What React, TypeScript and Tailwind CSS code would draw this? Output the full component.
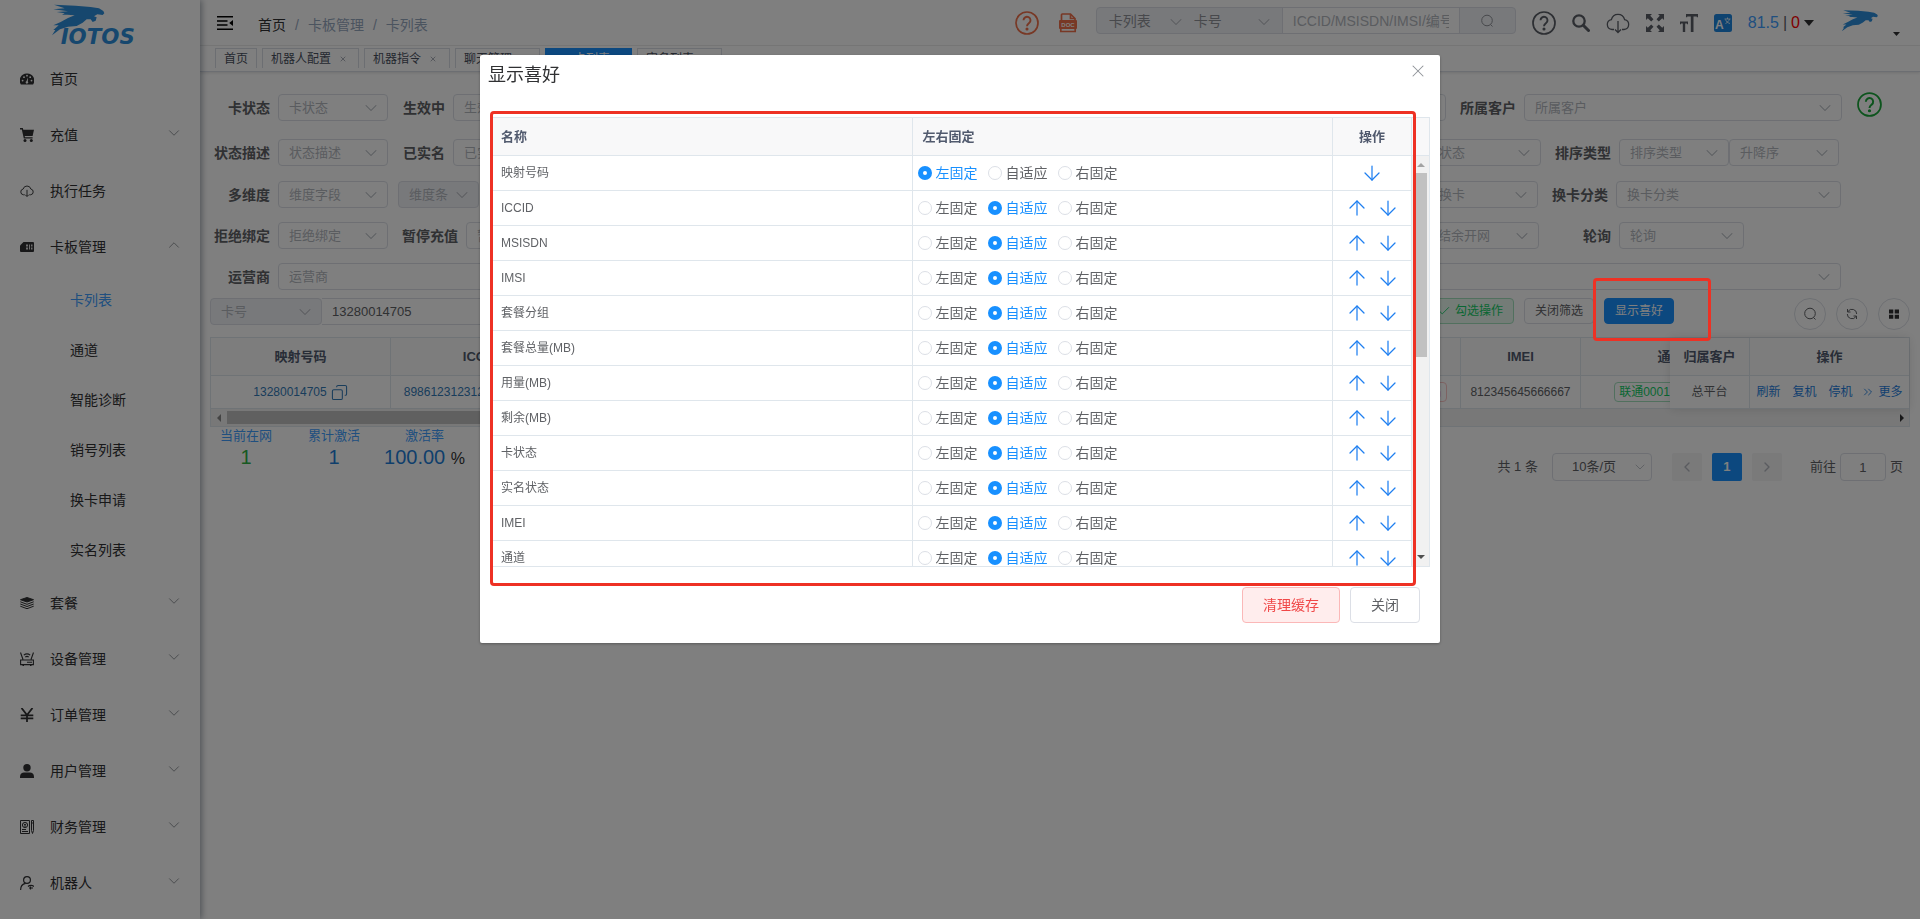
import { type ReactNode } from 'react'
import { ArrowDown, ArrowUp, Check, ChevronDown, ChevronLeft, ChevronRight, ChevronUp, ChevronsRight, Copy, X } from 'lucide-react'
import clsx from 'clsx'

const HORSE = 'M30 14 L95 17 L140 21 L165 25 L178 33 L181 40 L176 45 L160 43 L150 49 L158 52 L155 62 L146 66 L140 58 L128 58 L116 68 L98 78 L72 80 L48 88 L24 106 L34 90 L28 90 L44 76 L28 76 L50 66 L72 54 L92 46 L70 44 L54 44 L62 40 L38 36 L72 34 L28 28 L62 25 Z'

const rows = ['映射号码', 'ICCID', 'MSISDN', 'IMSI', '套餐分组', '套餐总量(MB)', '用量(MB)', '剩余(MB)', '卡状态', '实名状态', 'IMEI', '通道']
const pins = ['左固定', '自适应', '右固定']

const subMenu = ['卡列表', '通道', '智能诊断', '销号列表', '换卡申请', '实名列表']

const menu = [
    { label: '首页', icon: <DashboardIcon /> },
    { label: '充值', icon: <CartIcon />, arrow: 'down' },
    { label: '执行任务', icon: <CloudIcon size={14} width={1.6} /> },
    { label: '卡板管理', icon: <SimIcon />, arrow: 'up', children: subMenu },
    { label: '套餐', icon: <LayersIcon />, arrow: 'down' },
    { label: '设备管理', icon: <RouterIcon />, arrow: 'down' },
    { label: '订单管理', icon: <YenIcon />, arrow: 'down' },
    { label: '用户管理', icon: <UserIcon />, arrow: 'down' },
    { label: '财务管理', icon: <FinanceIcon />, arrow: 'down' },
    { label: '机器人', icon: <RobotIcon />, arrow: 'down' },
]

const tags = [
    { label: '首页', width: 'w-[42px]' },
    { label: '机器人配置', width: 'w-[97px]', closable: true },
    { label: '机器指令', width: 'w-[86px]', closable: true },
    { label: '聊天管理', width: 'w-[85px]', closable: true },
    { label: '卡列表', width: 'w-[87px]', closable: true, active: true },
    { label: '实名列表', width: 'w-[85px]', closable: true },
]

function DashboardIcon () {
    return (
        <svg width="14" height="14" viewBox="0 0 14 14">
            <path d="M7 1.5A7 7 0 0 0 .9 12.4h12.2A7 7 0 0 0 7 1.5Z" fill="currentColor" />
            <g fill="#fff">
                <circle cx="2.6" cy="8.6" r=".9" />
                <circle cx="4" cy="5.2" r=".9" />
                <circle cx="7" cy="3.7" r=".9" />
                <circle cx="10.2" cy="5.2" r=".9" />
                <circle cx="11.5" cy="8.6" r=".9" />
                <path d="M8 5.5 7.8 9.4a1.3 1.3 0 1 1-1.4-.2Z" />
            </g>
        </svg>
    )
}

function CartIcon () {
    return (
        <svg width="14" height="14" viewBox="0 0 14 14" fill="currentColor">
            <path d="M0 0h2.8l.5 1.8H14L12.6 8H4.7l.3 1.2h7.6v1.4H3.8L1.8 1.4H0Z" />
            <circle cx="5" cy="12.4" r="1.5" />
            <circle cx="11.3" cy="12.4" r="1.5" />
        </svg>
    )
}

function CloudIcon ({ size, width }: { size: number, width: number }) {
    return (
        <svg width={size} height={size} viewBox="0 0 24 24" fill="none" stroke="currentColor" strokeWidth={width}>
            <path d="M8 18.500H6a5 5 0 0 1-.6-9.900 6.800 6.800 0 0 1 13.200 0A5 5 0 0 1 18 18.500h-2" />
            <path d="M12 10v11M9 18.500l3 3 3-3" />
        </svg>
    )
}

function SimIcon () {
    return (
        <svg width="14" height="14" viewBox="0 0 14 14">
            <path d="M3.500 2H13a1 1 0 0 1 1 1v8a1 1 0 0 1-1 1H1a1 1 0 0 1-1-1V5.500Z" fill="currentColor" />
            <path d="M6 4.500h2v2H6zM6 7.500h2v2H6zM9 4.500h1v5H9zM11 4.500h1.500v2H11zM11 7.500h1.500v2H11z" fill="#ddd" />
        </svg>
    )
}

function LayersIcon () {
    return (
        <svg width="14" height="14" viewBox="0 0 14 14" fill="none" stroke="currentColor" strokeWidth="1">
            <path d="M7 1.500 13.500 3.700 7 6 .5 3.700Z" fill="currentColor" />
            <path d="M.3 5.800 7 8.300l6.700-2.500M.3 8 7 10.500 13.700 8M.3 10.200 7 12.700l6.700-2.500" />
        </svg>
    )
}

function RouterIcon () {
    return (
        <svg width="14" height="14" viewBox="0 0 14 14" fill="none" stroke="currentColor" strokeWidth="1.1">
            <path d="M.6 8h12.800v4.600H.6zM.5.5 3 7.500M13.500.5 11 7.500M2.500 13.500h1.500M10 13.500h1.500M7 10.300h5" />
            <path d="M3.800 3.200a5 5 0 0 1 6.400 0M5.300 5a3 3 0 0 1 3.400 0" />
        </svg>
    )
}

function YenIcon () {
    return (
        <svg width="14" height="14" viewBox="0 0 14 14" fill="none" stroke="currentColor" strokeWidth="1.8">
            <path d="M1.500 0 7 7l5.500-7M7 7v7M.7 7.300h12.600M.7 10.300h12.600" />
        </svg>
    )
}

function UserIcon () {
    return (
        <svg width="14" height="14" viewBox="0 0 14 14" fill="currentColor">
            <circle cx="7" cy="3.700" r="3.700" />
            <path d="M0 14v-1.500C0 9.800 2 8.400 4 8.400h6c2 0 4 1.400 4 4.100V14Z" />
        </svg>
    )
}

function FinanceIcon () {
    return (
        <svg width="14" height="14" viewBox="0 0 14 14" fill="none" stroke="currentColor" strokeWidth="1">
            <path d="M.5.5h9v13h-9zM2 9.500h4M2 11.500h6M11.500.5h2v10l-1 3-1-3ZM11.500 3h2" />
            <circle cx="5" cy="5" r="2.600" />
            <path d="m4 3.800 1 1.200 1-1.200M5 5v2" />
        </svg>
    )
}

function RobotIcon () {
    return (
        <svg width="14" height="14" viewBox="0 0 14 14" fill="none" stroke="currentColor" strokeWidth="1.200">
            <circle cx="7" cy="4" r="3.400" />
            <path d="M.6 14c0-3.500 2-6 5-6.600" />
            <path d="M8 10.500c1.500-1.500 4.500-1.500 6 0M9 12h4M10.500 13.500v-3" />
        </svg>
    )
}

function HelpIcon ({ size }: { size: number }) {
    return (
        <svg width={size} height={size} viewBox="0 0 24 24" fill="none" stroke="currentColor" strokeWidth="1.700">
            <circle cx="12" cy="12" r="11" />
            <path d="M8.500 9.300a3.500 3.500 0 1 1 5.600 2.800c-1.300 1-2.100 1.500-2.100 3.200" strokeWidth="1.900" />
            <circle cx="12" cy="18" r=".7" fill="currentColor" />
        </svg>
    )
}

function DocIcon () {
    return (
        <svg width="18" height="20" viewBox="0 0 18 20">
            <path d="M2.500 8V1.700C2.500 1.200 3 1 3.300 1h8.200L16 5.500V8M11.500 1v4.500H16" fill="none" stroke="currentColor" strokeWidth="1.700" />
            <rect y="7" width="18" height="9" rx="1" fill="currentColor" />
            <path d="M1.800 16v2.500h14.400V16" fill="none" stroke="currentColor" strokeWidth="1.700" />
            <text x="9" y="14" textAnchor="middle" fontSize="6" fontWeight="700" fill="#fff">DOC</text>
        </svg>
    )
}

function MagnifierIcon () {
    return (
        <svg width="18" height="18" viewBox="0 0 18 18" fill="none" stroke="currentColor">
            <circle cx="7" cy="7" r="5.700" strokeWidth="2.300" />
            <path d="m11.500 11.500 5 5" strokeWidth="3" strokeLinecap="round" />
        </svg>
    )
}

// Round lens with a short tail, used by the outlined search buttons
function SearchIcon () {
    return (
        <svg width="14" height="14" viewBox="0 0 14 14" fill="none" stroke="currentColor" strokeWidth="1">
            <circle cx="7" cy="6.500" r="5.300" />
            <path d="m10.500 10.500 2 2" />
        </svg>
    )
}

function FullscreenIcon () {
    return (
        <svg width="18" height="18" viewBox="0 0 18 18" fill="currentColor">
            <path d="M0 0h6L4.200 1.800 7.500 5.200 5.200 7.500 1.800 4.200 0 6ZM18 0v6l-1.800-1.800-3.400 3.300-2.300-2.300 3.300-3.400L12 0ZM0 18v-6l1.800 1.800 3.400-3.300 2.300 2.300-3.300 3.400L6 18ZM18 18h-6l1.800-1.800-3.300-3.400 2.300-2.300 3.400 3.300L18 12Z" />
        </svg>
    )
}

function FontSizeIcon () {
    return (
        <svg width="18" height="18" viewBox="0 0 18 18" fill="currentColor">
            <path d="M6 0h12v3.200h-1.200V2.400h-3.300V18h-2.700V2.400H7.200v.8H6ZM0 7.500h8v2.700H7V9.500H5.200V18H2.800V9.500H1v.7H0Z" />
        </svg>
    )
}

function LangIcon () {
    return (
        <svg width="18" height="18" viewBox="0 0 18 18">
            <rect width="18" height="18" rx="2.500" fill="#1c86e0" />
            <text x="1" y="15" fontSize="12" fontWeight="700" fill="#fff">A</text>
            <path d="M10.500 5h6M13.500 3.500V5M11.500 9.500c2-1 3.500-2.500 4-4.500M11.500 5.500c.7 2 2.500 3.500 4.500 4" fill="none" stroke="#fff" strokeWidth=".8" />
        </svg>
    )
}

function HamburgerIcon () {
    return (
        <svg width="16" height="14" viewBox="0 0 16 14" fill="#000">
            <path d="M0 0h16v1.500H0zM0 4.200h10.500v1.500H0zM0 8.300h10.500v1.500H0zM0 12.500h16V14H0zM16 4v6l-3.800-3Z" />
        </svg>
    )
}

function RefreshIcon () {
    return (
        <svg width="14" height="14" viewBox="0 0 14 14" fill="none" stroke="currentColor" strokeWidth="1">
            <path d="M3 4.500A4.700 4.700 0 0 1 11.700 7M11 9.500A4.700 4.700 0 0 1 2.300 7M2.500 2v3h3M11.500 12V9h-3" />
        </svg>
    )
}

function GridIcon () {
    return (
        <svg width="14" height="14" viewBox="0 0 14 14" fill="#303133">
            <path d="M2 2.500h4.300v4H2zM7.700 2.500H12v4H7.700zM2 7.700h4.300v4H2zM7.700 7.700H12v4H7.700z" />
        </svg>
    )
}

function Triangle ({ points, className }: { points: string, className: string }) {
    return (
        <svg width="10" height="10" viewBox="0 0 10 10" className={className} fill="currentColor">
            <polygon points={points} />
        </svg>
    )
}

function Field ({ label, className, disabled }: { label: string, className: string, disabled?: boolean }) {
    return (
        <div className={clsx('relative', className)}>
            <select
                aria-label={label}
                className={clsx(
                    'block h-[27px] w-full appearance-none rounded border border-[#dcdfe6] pr-6 pl-[10px] text-[13px] text-[#b4b8bf]',
                    disabled ? 'bg-[#f0f2f7]' : 'bg-white'
                )}
            >
                <option>{label}</option>
            </select>
            <ChevronDown size={20} strokeWidth={1.25} className="pointer-events-none absolute top-1 right-[7px] text-[#b4b8bf]" />
        </div>
    )
}

function Label ({ children, className }: { children: ReactNode, className?: string }) {
    return <span className={clsx('shrink-0 pt-1 pr-2 text-right text-sm leading-5 font-bold text-[#606266]', className)}>{children}</span>
}

function Sidebar () {
    return (
        <aside className="relative z-10 w-[200px] shrink-0 bg-white shadow-[2px_0_6px_rgba(0,21,41,0.35)]">
            <a href="#" aria-label="IOTOS" className="block h-[51px] pl-11">
                <svg width="100" height="50" viewBox="0 0 300 150" fill="#2d8fdc">
                    <path d={HORSE} />
                    <text x="50" y="132" fontSize="64" fontWeight="700" fontStyle="italic" fontFamily="DejaVu Sans">IOTOS</text>
                </svg>
            </a>
            <nav>
                <ul>
                    {menu.map(item => (
                        <li key={item.label}>
                            <a href="#" className="flex h-14 items-center pr-[17px] pl-5 text-sm text-[#303133]">
                                <span className="w-[30px] shrink-0">{item.icon}</span>
                                <span className="flex-1">{item.label}</span>
                                {item.arrow === 'down' && <ChevronDown size={18} strokeWidth={1.25} className="mb-1 text-[#909399]" />}
                                {item.arrow === 'up' && <ChevronUp size={18} strokeWidth={1.25} className="mb-1 text-[#909399]" />}
                            </a>
                            {item.children && (
                                <ul>
                                    {item.children.map((child, idx) => (
                                        <li key={child}>
                                            <a href="#" className={clsx('flex h-[50px] items-center pl-[70px] text-sm', idx === 0 ? 'text-[#409eff]' : 'text-[#303133]')}>
                                                {child}
                                            </a>
                                        </li>
                                    ))}
                                </ul>
                            )}
                        </li>
                    ))}
                </ul>
            </nav>
        </aside>
    )
}

function Navbar () {
    return (
        <header className="flex h-[46px] items-center border-b border-[#f0f0f0] pr-[19px] pl-[17px]">
            <button type="button" aria-label="折叠菜单"><HamburgerIcon /></button>
            <nav className="ml-[25px] flex flex-1 gap-[9px] pt-1 text-sm text-[#97a8be]">
                <a href="#" className="text-[#303133]">首页</a>
                <span>/</span>
                <span>卡板管理</span>
                <span>/</span>
                <span>卡列表</span>
            </nav>
            <button type="button" aria-label="帮助" className="mr-5 text-[#f0704a]"><HelpIcon size={24} /></button>
            <button type="button" aria-label="文档" className="mr-[19px] text-[#f0704a]"><DocIcon /></button>
            <div className="mr-4 mb-1 flex h-[27px] w-[420px] overflow-hidden rounded border border-[#dcdfe6] bg-[#f0f2f7] text-sm text-[#909399]">
                <div className="relative w-[85px]">
                    <select aria-label="页面" className="h-full w-full appearance-none pl-3">
                        <option>卡列表</option>
                    </select>
                    <ChevronDown size={20} strokeWidth={1.25} className="pointer-events-none absolute top-1 -right-1 text-[#b4b8bf]" />
                </div>
                <div className="relative w-[101px] border-r border-[#dcdfe6]">
                    <select aria-label="字段" className="h-full w-full appearance-none pl-3">
                        <option>卡号</option>
                    </select>
                    <ChevronDown size={20} strokeWidth={1.25} className="pointer-events-none absolute top-1 right-2 text-[#b4b8bf]" />
                </div>
                <input aria-label="搜索" placeholder="ICCID/MSISDN/IMSI/编号" className="w-44 bg-white px-[10px] text-sm placeholder:text-[#b4b8bf]" />
                <button type="button" aria-label="搜索" className="flex flex-1 items-center justify-center border-l border-[#dcdfe6]"><SearchIcon /></button>
            </div>
            <div className="flex items-center gap-4 text-[#5a5e66]">
                <button type="button" aria-label="帮助中心"><HelpIcon size={24} /></button>
                <button type="button" aria-label="查找"><MagnifierIcon /></button>
                <button type="button" aria-label="下载"><CloudIcon size={24} width={1.3} /></button>
                <button type="button" aria-label="全屏"><FullscreenIcon /></button>
                <button type="button" aria-label="字号"><FontSizeIcon /></button>
                <button type="button" aria-label="语言"><LangIcon /></button>
            </div>
            <button type="button" className="ml-4 flex items-center gap-1 text-base text-[#606266]">
                <span className="text-[#409eff]">81.5</span>
                <span>|</span>
                <span className="text-[#f00]">0</span>
                <Triangle points="0,2 10,2 5,8" className="text-[#303133]" />
            </button>
            <button type="button" aria-label="账户" className="ml-[26px] flex items-end gap-3">
                <svg width="39" height="32" viewBox="16 10 170 120" fill="#2d8fdc">
                    <path d={HORSE} />
                </svg>
                <Triangle points="2,3 9,3 5.500,7" className="text-[#303133]" />
            </button>
        </header>
    )
}

function Tags () {
    return (
        <div className="flex h-[26px] gap-[5px] overflow-hidden border-b border-[#d8dce5] pt-[2px] pl-[15px] shadow-[0_1px_3px_rgba(0,0,0,0.12)]">
            {tags.map(tag => (
                <a
                    key={tag.label}
                    href="#"
                    className={clsx(
                        'flex h-5 shrink-0 items-center border border-b-0 pl-2 text-xs',
                        tag.width,
                        tag.active ? 'border-[#1890ff] bg-[#1890ff] text-white' : 'border-[#d8dce5] text-[#495060]'
                    )}
                >
                    {tag.active && <span className="mr-2 ml-1 size-2 rounded-full bg-white" />}
                    {tag.label}
                    {tag.closable && <X size={8} className="ml-2 text-[#808695]" />}
                </a>
            ))}
        </div>
    )
}

function Filters () {
    return (
        <form className="flex flex-col pt-[22px] pl-[10px]">
            <div className="flex h-[45px]">
                <Label className="w-[68px]">卡状态</Label>
                <Field label="卡状态" className="w-[110px]" />
                <Label className="w-[65px]">生效中</Label>
                <Field label="生效中" className="flex-1" />
                <Label className="w-[78px]">所属客户</Label>
                <Field label="所属客户" className="w-[318px]" />
                <button type="button" aria-label="说明" className="-mt-[2px] mr-[38px] ml-[15px] h-6 text-[#1aa83a]"><HelpIcon size={25} /></button>
            </div>
            <div className="flex h-[42px] pr-[81px]">
                <Label className="w-[68px]">状态描述</Label>
                <Field label="状态描述" className="w-[110px]" />
                <Label className="w-[65px]">已实名</Label>
                <Field label="已实名" className="flex-1" />
                <Field label="状态" className="ml-4 w-[113px]" />
                <Label className="w-[78px]">排序类型</Label>
                <Field label="排序类型" className="w-[110px]" />
                <Field label="升降序" className="w-[110px]" />
            </div>
            <div className="flex h-[41px] pr-[79px]">
                <Label className="w-[68px]">多维度</Label>
                <Field label="维度字段" className="w-[110px]" />
                <Field label="维度条" disabled className="ml-[10px] w-[81px]" />
                <Field label="维度值" className="ml-[10px] flex-1" />
                <Field label="换卡" className="ml-4 w-[110px]" />
                <Label className="w-[78px]">换卡分类</Label>
                <Field label="换卡分类" className="w-[225px]" />
            </div>
            <div className="flex h-[41px] pr-[176px]">
                <Label className="w-[68px]">拒绝绑定</Label>
                <Field label="拒绝绑定" className="w-[110px]" />
                <Label className="w-[78px]">暂停充值</Label>
                <Field label="暂停充值" className="flex-1" />
                <Field label="结余开网" className="ml-4 w-[112px]" />
                <Label className="w-20">轮询</Label>
                <Field label="轮询" className="w-[125px]" />
            </div>
            <div className="flex h-[35px] pr-[79px]">
                <Label className="w-[68px]">运营商</Label>
                <Field label="运营商" className="flex-1" />
            </div>
        </form>
    )
}

function Toolbar () {
    return (
        <div className="flex h-[39px] pr-[10px] pl-[10px]">
            <Field label="卡号" disabled className="w-28" />
            <input aria-label="卡号" defaultValue="13280014705" className="h-[27px] w-80 rounded-r border border-l-0 border-[#dcdfe6] px-[10px] text-[13px] text-[#606266]" />
            <div className="flex-1" />
            <button type="button" className="mr-[10px] flex h-[26px] items-center gap-1 rounded border border-[#a3e0bd] bg-[#e8f8ef] px-[10px] text-xs text-[#13ce66]">
                <Check size={14} strokeWidth={1.5} />勾选操作
            </button>
            <button type="button" className="mr-[10px] h-[26px] rounded border border-[#dcdfe6] px-[10px] text-xs text-[#606266]">关闭筛选</button>
            <div className="relative mr-[120px]">
                <button type="button" className="h-[26px] rounded border border-[#1890ff] bg-[#1890ff] px-[10px] text-xs text-white">显示喜好</button>
                <div className="pointer-events-none absolute -top-[20px] -left-[11px] z-50 h-[63px] w-[118px] rounded border-[3px] border-[#ee3124]" />
            </div>
            <div className="flex gap-[10px] text-[#606266]">
                <button type="button" aria-label="搜索" className="flex size-8 items-center justify-center rounded-full border border-[#dcdfe6]"><SearchIcon /></button>
                <button type="button" aria-label="刷新" className="flex size-8 items-center justify-center rounded-full border border-[#dcdfe6]"><RefreshIcon /></button>
                <button type="button" aria-label="显隐列" className="flex size-8 items-center justify-center rounded-full border border-[#dcdfe6]"><GridIcon /></button>
            </div>
        </div>
    )
}

function CardTable () {
    const th = 'h-[38px] border-r border-b border-[#dfe6ec] bg-[#fafafa] text-center text-[13px] font-bold text-[#515a6e]'
    const td = 'h-[33px] border-r border-b border-[#dfe6ec] text-center text-xs'

    return (
        <div className="mr-[10px] ml-[10px] border border-[#dfe6ec]">
            <div className="flex">
                <div className="min-w-0 flex-1 overflow-hidden">
                    <table className="w-[calc(100%+91px)] table-fixed border-separate border-spacing-0">
                        <thead>
                            <tr>
                                <th className={clsx(th, 'w-[180px]')}>映射号码</th>
                                <th className={clsx(th, 'w-[180px]')}>ICCID</th>
                                <th className={th}>MSISDN</th>
                                <th className={th}>实名状态</th>
                                <th className={clsx(th, 'w-[120px]')}>IMEI</th>
                                <th className={clsx(th, 'w-[180px]')}>通道</th>
                            </tr>
                        </thead>
                        <tbody>
                            <tr>
                                <td className={clsx(td, 'text-[#337ab7]')}>
                                    <span className="inline-flex items-center gap-1">13280014705<Copy size={17} strokeWidth={1.5} className="-scale-x-100" /></span>
                                </td>
                                <td className={clsx(td, 'text-[#337ab7]')}>89861231231231231231231</td>
                                <td className={clsx(td, 'text-[#606266]')}>13280014705</td>
                                <td className={clsx(td, 'pr-[13px] text-right')}>
                                    <span className="inline-block rounded border border-[#fbc4c4] px-1 leading-[18px] text-[#f56c6c]">未实名</span>
                                </td>
                                <td className={clsx(td, 'text-[#606266]')}>812345645666667</td>
                                <td className={td}>
                                    <span className="inline-block rounded border border-[#a3e0bd] px-1 leading-[18px] text-[#13ce66]">联通0001-测试通道</span>
                                </td>
                            </tr>
                        </tbody>
                    </table>
                </div>
                <table className="w-[239px] table-fixed border-separate border-spacing-0 shadow-[0_0_10px_rgba(0,0,0,0.12)]">
                    <thead>
                        <tr>
                            <th className={clsx(th, 'w-20')}>归属客户</th>
                            <th className={clsx(th, 'border-r-0')}>操作</th>
                        </tr>
                    </thead>
                    <tbody>
                        <tr>
                            <td className={clsx(td, 'text-[#606266]')}>总平台</td>
                            <td className={clsx(td, 'border-r-0 text-[#1f7fe0]')}>
                                <div className="flex items-center justify-center gap-3">
                                    <a href="#">刷新</a>
                                    <a href="#">复机</a>
                                    <a href="#">停机</a>
                                    <a href="#" className="-ml-1 flex items-center gap-1"><ChevronsRight size={14} strokeWidth={1.5} />更多</a>
                                </div>
                            </td>
                        </tr>
                    </tbody>
                </table>
            </div>
            <div className="flex h-[17px] items-center bg-[#f1f1f1] pr-[2px] pl-[2px]">
                <Triangle points="8,1 8,9 4,5" className="mr-1 text-[#888]" />
                <div className="h-[13px] w-3/5 bg-[#c1c1c1]" />
                <Triangle points="3,1 3,9 7,5" className="ml-auto text-[#303133]" />
            </div>
        </div>
    )
}

function Footer () {
    return (
        <div className="flex justify-between pr-[17px] pl-5">
            <dl className="flex gap-9 text-center text-[13px] leading-[18px] text-[#409eff]">
                <div>
                    <dt>当前在网</dt>
                    <dd className="text-xl leading-6 text-[#2fb344]">1</dd>
                </div>
                <div>
                    <dt>累计激活</dt>
                    <dd className="text-xl leading-6 text-[#1f7fd8]">1</dd>
                </div>
                <div className="-ml-3">
                    <dt>激活率</dt>
                    <dd className="text-xl leading-6 text-[#1f7fd8]">100.00 <span className="text-base text-[#303133]">%</span></dd>
                </div>
            </dl>
            <div className="mt-[26px] flex h-7 items-center text-[13px] text-[#606266]">
                <span className="mr-[14px]">共 1 条</span>
                <div className="relative mr-5 w-[100px]">
                    <select aria-label="每页条数" className="block h-7 w-full appearance-none rounded border border-[#dcdfe6] pl-[19px] text-[13px]">
                        <option>10条/页</option>
                    </select>
                    <ChevronDown size={16} strokeWidth={1.25} className="pointer-events-none absolute top-[6px] right-1 text-[#b4b8bf]" />
                </div>
                <div className="mr-7 flex gap-[10px]">
                    <button type="button" aria-label="上一页" className="flex h-7 w-[30px] items-center justify-center rounded-xs bg-[#f4f4f5] text-[#b4b8bf]"><ChevronLeft size={16} /></button>
                    <button type="button" className="h-7 w-[30px] rounded-xs bg-[#1890ff] font-bold text-white">1</button>
                    <button type="button" aria-label="下一页" className="flex h-7 w-[30px] items-center justify-center rounded-xs bg-[#f4f4f5] text-[#b4b8bf]"><ChevronRight size={16} /></button>
                </div>
                <label className="flex items-center gap-1">
                    前往
                    <input defaultValue="1" className="h-7 w-[46px] rounded border border-[#dcdfe6] text-center" />
                    页
                </label>
            </div>
        </div>
    )
}

function PinRadio ({ row, label, checked }: { row: string, label: string, checked: boolean }) {
    return (
        <label className={clsx('flex items-center gap-1 text-sm', checked ? 'text-[#1890ff]' : 'text-[#606266]')}>
            <input
                type="radio"
                name={row}
                defaultChecked={checked}
                className="size-[14px] appearance-none rounded-full border border-[#dcdfe6] bg-white checked:border-[5px] checked:border-[#1890ff]"
            />
            {label}
        </label>
    )
}

function PreferenceDialog () {
    return (
        <div className="fixed inset-0 z-40 bg-black/50">
            <div role="dialog" aria-label="显示喜好" className="relative mx-auto mt-[55px] w-1/2 rounded-xs bg-white pb-5 shadow-[0_1px_3px_rgba(0,0,0,0.3)]">
                <div className="flex h-[62px] items-start justify-between pt-[6px] pr-3 pl-2">
                    <h2 className="pt-[2px] text-lg leading-6 text-[#303133]">显示喜好</h2>
                    <button type="button" aria-label="关闭"><X size={20} strokeWidth={1.25} className="text-[#909399]" /></button>
                </div>

                <div className="mr-[10px] ml-[11px] flex h-[450px] overflow-hidden border border-[#dfe6ec]">
                    <div className="flex-1 overflow-hidden">
                        <table className="w-full table-fixed border-separate border-spacing-0 text-left">
                            <thead>
                                <tr className="text-[13px] text-[#515a6e]">
                                    <th className="h-[38px] border-r border-b border-[#dfe6ec] bg-[#f8f8f9] pl-[9px]">名称</th>
                                    <th className="border-r border-b border-[#dfe6ec] bg-[#f8f8f9] pl-[10px]">左右固定</th>
                                    <th className="w-[79px] border-r border-b border-[#dfe6ec] bg-[#f8f8f9] text-center">操作</th>
                                </tr>
                            </thead>
                            <tbody>
                                {rows.map((row, idx) => (
                                    <tr key={row}>
                                        <td className="h-[35px] border-r border-b border-[#dfe6ec] pl-[9px] text-xs text-[#606266]">{row}</td>
                                        <td className="border-r border-b border-[#dfe6ec] pl-[5px]">
                                            <div className="flex gap-[10px]">
                                                {pins.map(pin => (
                                                    <PinRadio key={pin} row={row} label={pin} checked={pin === (idx === 0 ? '左固定' : '自适应')} />
                                                ))}
                                            </div>
                                        </td>
                                        <td className="border-r border-b border-[#dfe6ec]">
                                            <div className="flex justify-center gap-[7px] text-[#1f7ff0]">
                                                {idx > 0 && <button type="button" aria-label="上移"><ArrowUp size={24} strokeWidth={1.25} /></button>}
                                                <button type="button" aria-label="下移"><ArrowDown size={24} strokeWidth={1.25} /></button>
                                            </div>
                                        </td>
                                    </tr>
                                ))}
                            </tbody>
                        </table>
                    </div>
                    <div className="flex w-[17px] flex-col">
                        <div className="h-[38px] shrink-0 border-b border-[#dfe6ec] bg-[#f8f8f9]" />
                        <div className="flex flex-1 flex-col items-center justify-between bg-[#f1f1f1] py-1">
                            <Triangle points="1,7 9,7 5,3" className="text-[#a3a3a3]" />
                            <div className="mt-[3px] mb-auto h-[184px] w-[13px] bg-[#c1c1c1]" />
                            <Triangle points="1,3 9,3 5,7" className="text-[#505050]" />
                        </div>
                    </div>
                </div>

                <div className="mt-5 flex justify-end gap-[10px] pr-5">
                    <button type="button" className="h-9 rounded border border-[#fbb8b8] bg-[#ffeded] px-5 text-sm text-[#f04848]">清理缓存</button>
                    <button type="button" className="h-9 rounded border border-[#dcdfe6] bg-white px-5 text-sm text-[#606266]">关闭</button>
                </div>

                <div className="pointer-events-none absolute top-[56px] right-6 bottom-[57px] left-[10px] rounded border-[3px] border-[#ee3124]" />
            </div>
        </div>
    )
}

export default function App () {
    return (
        <div className="flex min-h-screen bg-white font-['Liberation_Sans','Noto_Sans_CJK_SC',sans-serif]">
            <Sidebar />
            <main className="min-w-0 flex-1">
                <Navbar />
                <Tags />
                <Filters />
                <Toolbar />
                <CardTable />
                <Footer />
            </main>
            <PreferenceDialog />
        </div>
    )
}
